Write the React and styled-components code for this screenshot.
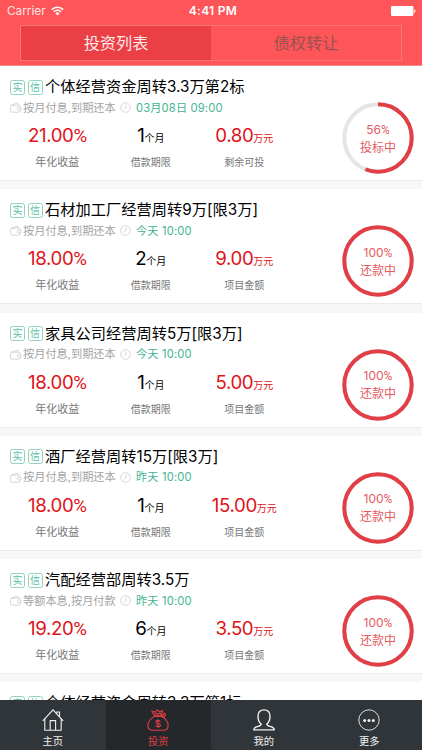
import React from "react";
import styled, { createGlobalStyle } from "styled-components";

const items = [
	{ title: "个体经营资金周转3.3万第2标", pay: "按月付息,到期还本", time: "03月08日 09:00", rate: "21.00", months: "1", amount: "0.80", label: "剩余可投", percent: 56, status: "投标中" },
	{ title: "石材加工厂经营周转9万[限3万]", pay: "按月付息,到期还本", time: "今天 10:00", rate: "18.00", months: "2", amount: "9.00", label: "项目金额", percent: 100, status: "还款中" },
	{ title: "家具公司经营周转5万[限3万]", pay: "按月付息,到期还本", time: "今天 10:00", rate: "18.00", months: "1", amount: "5.00", label: "项目金额", percent: 100, status: "还款中" },
	{ title: "酒厂经营周转15万[限3万]", pay: "按月付息,到期还本", time: "昨天 10:00", rate: "18.00", months: "1", amount: "15.00", label: "项目金额", percent: 100, status: "还款中" },
	{ title: "汽配经营部周转3.5万", pay: "等额本息,按月付款", time: "昨天 10:00", rate: "19.20", months: "6", amount: "3.50", label: "项目金额", percent: 100, status: "还款中" },
];

const WifiIcon = () => (
	<svg width="13" height="10" viewBox="0 0 13 10" fill="none" stroke="#fff" strokeWidth="1.5">
		<path d="M0.8 3.6a8.1 8.1 0 0 1 11.4 0" />
		<path d="M2.8 5.8a5.2 5.2 0 0 1 7.4 0" />
		<path d="M6.5 9.5 4.4 7.3a3 3 0 0 1 4.2 0z" fill="#fff" stroke="none" />
	</svg>
);

const BatteryIcon = () => (
	<svg width="25" height="10" viewBox="0 0 25 10" fill="#fff">
		<rect x="0" y="0" width="22.4" height="10" rx="1.2" />
		<path d="M23.2 3.2a1.9 1.9 0 0 1 0 3.6z" />
	</svg>
);

const WalletIcon = () => (
	<svg width="12" height="11" viewBox="0 0 12 11" fill="none" stroke="#ccc" strokeWidth="0.8">
		<rect x="0.6" y="3.2" width="9.6" height="7" rx="1.4" />
		<path d="M1 3.3 7.4 1l1.3 2.2" />
		<path d="M10.9 5.3H8.5a1.3 1.3 0 0 0 0 2.6h2.4z" fill="#fff" />
	</svg>
);

const ClockIcon = () => (
	<svg width="11" height="11" viewBox="0 0 11 11" fill="none" stroke="#ccc" strokeWidth="0.8">
		<circle cx="5.5" cy="5.5" r="4.8" />
		<path d="M6.2 2.5 5.7 6 3.8 7.4" />
	</svg>
);

const HomeIcon = () => (
	<svg width="22" height="22" viewBox="0 0 22 22" fill="none" stroke="currentColor" strokeWidth="1.1">
		<path d="M0.8 11.8 11 0.8l10.2 11" />
		<path d="M2.8 9.8v11.400h16.400V9.8" />
		<path d="M8.200 21v-9.400h5.400V21" />
		<path d="M14.800 4.600V3h2.700v4.600" />
	</svg>
);

const MoneyIcon = () => (
	<svg width="22" height="22" viewBox="0 0 22 22" fill="none" stroke="currentColor" strokeWidth="1.1">
		<path d="M7.2 7.4C3.600 9.600.900 12.600.900 16.200c0 3.200 1.900 5 4.800 5h10.600c2.900 0 4.800-1.800 4.800-5 0-3.600-2.500-6.600-6.300-8.800" />
		<path d="M7.400 6.700 5 2.200l3.300.8L10.200.8l2.100 1.800 3.300-.9-1.300 5z" />
		<path d="M7.200 5 8.800 4l1.700 1.500L13 3.800l1 1.800M6.900 7.400h8" />
		<path d="M14.800 6.200l3.200-2 .3 2.500-3.500.7 3 1.500" />
		<path d="M13.300 12.800c-.3-1-1.100-1.400-2.300-1.400-1.300 0-2.100.6-2.100 1.500 0 2.300 4.500 1 4.500 3.300 0 1-.9 1.600-2.300 1.600s-2.300-.6-2.500-1.700M11 10.300v8.600" />
	</svg>
);

const UserIcon = () => (
	<svg width="22" height="22" viewBox="0 0 22 22" fill="none" stroke="currentColor" strokeWidth="1.4">
		<path d="M8.200 15C6 13.300 5 10.800 5 7.500 5 3.400 7.400.9 11 .9s6 2.500 6 6.600c0 3.300-1 5.800-3.200 7.500 0 1.700 1.500 2.100 4 2.600 2.200.5 3.400 1.400 3.400 3.300H.8c0-1.900 1.200-2.800 3.400-3.300 2.500-.5 4-.9 4-2.600z" />
	</svg>
);

const MoreIcon = () => (
	<svg width="22" height="22" viewBox="0 0 22 22" fill="none" stroke="currentColor" strokeWidth="0.9">
		<circle cx="11" cy="11" r="10.2" />
		<g fill="currentColor" stroke="none">
			<circle cx="6.7" cy="11.5" r="1.5" />
			<circle cx="11" cy="11.5" r="1.5" />
			<circle cx="15.3" cy="11.5" r="1.5" />
		</g>
	</svg>
);

const Progress = ({ percent, status }) => {
	const length = 2 * Math.PI * 33.7;
	return (
		<Ring>
			<svg width="72" height="72" viewBox="0 0 72 72" fill="none" strokeWidth="4">
				<circle cx="36" cy="36" r="33.7" stroke="#e5e5e5" />
				<circle
					cx="36"
					cy="36"
					r="33.7"
					stroke="#e23e45"
					strokeDasharray={`${(length * percent) / 100} ${length}`}
					transform="rotate(-90 36 36)"
				/>
			</svg>
			<RingText>
				<span>{percent}<Percent>%</Percent></span>
				<span>{status}</span>
			</RingText>
		</Ring>
	);
};

const Item = ({ item }) => (
	<Card>
		<TitleRow>
			<Tag>实</Tag>
			<Tag>信</Tag>
			<Title>{item.title}</Title>
		</TitleRow>
		<MetaRow>
			<WalletIcon />
			<Pay>{item.pay}</Pay>
			<ClockIcon />
			<Time>{item.time}</Time>
		</MetaRow>
		<Stats>
			<Stat>
				<Value $red>{item.rate}<Percent>%</Percent></Value>
				<Label $size="11px">年化收益</Label>
			</Stat>
			<Stat>
				<Value>{item.months}<small>个月</small></Value>
				<Label>借款期限</Label>
			</Stat>
			<Stat>
				<Value $red>{item.amount}<small>万元</small></Value>
				<Label>{item.label}</Label>
			</Stat>
		</Stats>
		<Progress percent={item.percent} status={item.status} />
	</Card>
);

const App = () => {
	return (
		<Screen>
			<GlobalStyle />
			<Header>
				<StatusBar>
					<Carrier>Carrier <WifiIcon /></Carrier>
					<Clock>4:41 PM</Clock>
					<Battery><BatteryIcon /></Battery>
				</StatusBar>
				<Segments>
					<Segment $active>投资列表</Segment>
					<Segment>债权转让</Segment>
				</Segments>
			</Header>
			<List>
				{items.map((item) => (
					<Item key={item.title} item={item} />
				))}
				{/* only the top of this row shows above the tab bar */}
				<Card>
					<TitleRow>
						<Tag>实</Tag>
						<Tag>信</Tag>
						<Title>个体经营资金周转3.3万第1标</Title>
					</TitleRow>
				</Card>
			</List>
			<TabBar>
				<Tab><HomeIcon />主页</Tab>
				<Tab $active><MoneyIcon />投资</Tab>
				<Tab><UserIcon />我的</Tab>
				<Tab><MoreIcon />更多</Tab>
			</TabBar>
		</Screen>
	);
};

const GlobalStyle = createGlobalStyle`
	* {
		box-sizing: border-box;
	}

	body {
		margin: 0;
		font-family: Inter, "Noto Sans CJK SC", sans-serif;
	}

	svg {
		display: block;
		flex-shrink: 0;
	}
`;

const Screen = styled.div`
	width: 422px;
	height: 750px;
	display: flex;
	flex-direction: column;
	overflow: hidden;
	background: #f7f7f7;
`;

const Header = styled.header`
	height: 66px;
	flex-shrink: 0;
	background: #fd5558;
	border-bottom: 1px solid #f58a8c;
	color: #fff;
`;

const StatusBar = styled.div`
	height: 25px;
	padding: 0 6px 3px 7px;
	display: grid;
	grid-template-columns: 1fr auto 1fr;
	align-items: center;
	font-size: 12px;
	line-height: 14px;
`;

const Carrier = styled.div`
	display: flex;
	align-items: center;
	gap: 5px;
	color: #ffe3e3;
	font-size: 11.8px;
`;

const Clock = styled.div`
	padding-left: 3px;
	font-weight: 600;
	letter-spacing: 0.3px;
`;

const Battery = styled.div`
	justify-self: end;
`;

const Segments = styled.div`
	width: 382px;
	height: 36px;
	margin-left: 20px;
	display: flex;
	border: 1px solid #fa7779;
`;

const Segment = styled.div`
	flex: 1;
	display: flex;
	align-items: center;
	justify-content: center;
	font-size: 16.2px;
	line-height: 24px;
	background: ${(props) => (props.$active ? "#ea3f45" : "transparent")};
	color: ${(props) => (props.$active ? "#ffe9e9" : "#9b5052")};
`;

const List = styled.main`
	flex: 1;
	min-height: 0;
	overflow: hidden;
`;

const Card = styled.section`
	position: relative;
	height: 115px;
	margin-bottom: 8.3px;
	padding: 11px 10px 0;
	background: #fff;
	border-bottom: 1px solid #ebebeb;
`;

const TitleRow = styled.div`
	height: 20px;
	display: flex;
	align-items: center;
`;

const Tag = styled.span`
	width: 15px;
	height: 15px;
	margin-right: 2.5px;
	display: flex;
	align-items: center;
	justify-content: center;
	border: 1px solid #8fd3c0;
	border-radius: 2.5px;
	color: #5bbfa4;
	font-size: 10px;
	line-height: 13px;
`;

const Title = styled.h2`
	margin: 0;
	font-size: 15.25px;
	font-weight: 400;
	line-height: 20px;
	color: #000;
	white-space: nowrap;
`;

const MetaRow = styled.div`
	height: 21px;
	display: flex;
	align-items: center;
	font-size: 11.2px;
	line-height: 16px;
	white-space: nowrap;
`;

const Pay = styled.span`
	width: 93px;
	margin: 0 4px 0 1px;
	color: #a3a3a3;
`;

const Time = styled.span`
	margin-left: 5px;
	letter-spacing: 0.15px;
	color: #42b391;
`;

const Stats = styled.div`
	display: grid;
	grid-template-columns: repeat(3, 93.5px);
	padding: 6px 0 0 0.6px;
`;

const Stat = styled.div`
	display: flex;
	flex-direction: column;
	align-items: center;
`;

/* Inter's percent sign is too wide next to these digits */
const Percent = styled.span`
	font-family: Roboto, sans-serif;
`;

const Value = styled.div`
	height: 24px;
	font-size: 18.7px;
	line-height: 24px;
	letter-spacing: -0.4px;
	color: ${(props) => (props.$red ? "#e01219" : "#000")};

	small {
		font-size: 10px;
		line-height: 1;
		letter-spacing: 0;
	}
`;

const Label = styled.div`
	height: 16px;
	margin-top: 6px;
	font-size: ${(props) => props.$size || "10px"};
	line-height: 16px;
	color: #777;
`;

/* sits over the right edge of the card, beside the stats */
const Ring = styled.div`
	position: absolute;
	top: 36px;
	right: 8px;
`;

const RingText = styled.div`
	position: absolute;
	inset: 0;
	display: flex;
	flex-direction: column;
	align-items: center;
	justify-content: center;
	font-size: 12px;
	line-height: 17px;
	color: #e45a60;
`;

const TabBar = styled.nav`
	height: 50px;
	flex-shrink: 0;
	display: flex;
	background: #303539;
`;

const Tab = styled.div`
	flex: 1;
	padding-top: 9px;
	display: flex;
	flex-direction: column;
	align-items: center;
	gap: 3px;
	font-size: 10.3px;
	line-height: 14px;
	background: ${(props) => (props.$active ? "#25282b" : "transparent")};
	color: ${(props) => (props.$active ? "#df3d44" : "#f0f1f1")};
`;

export default App;
